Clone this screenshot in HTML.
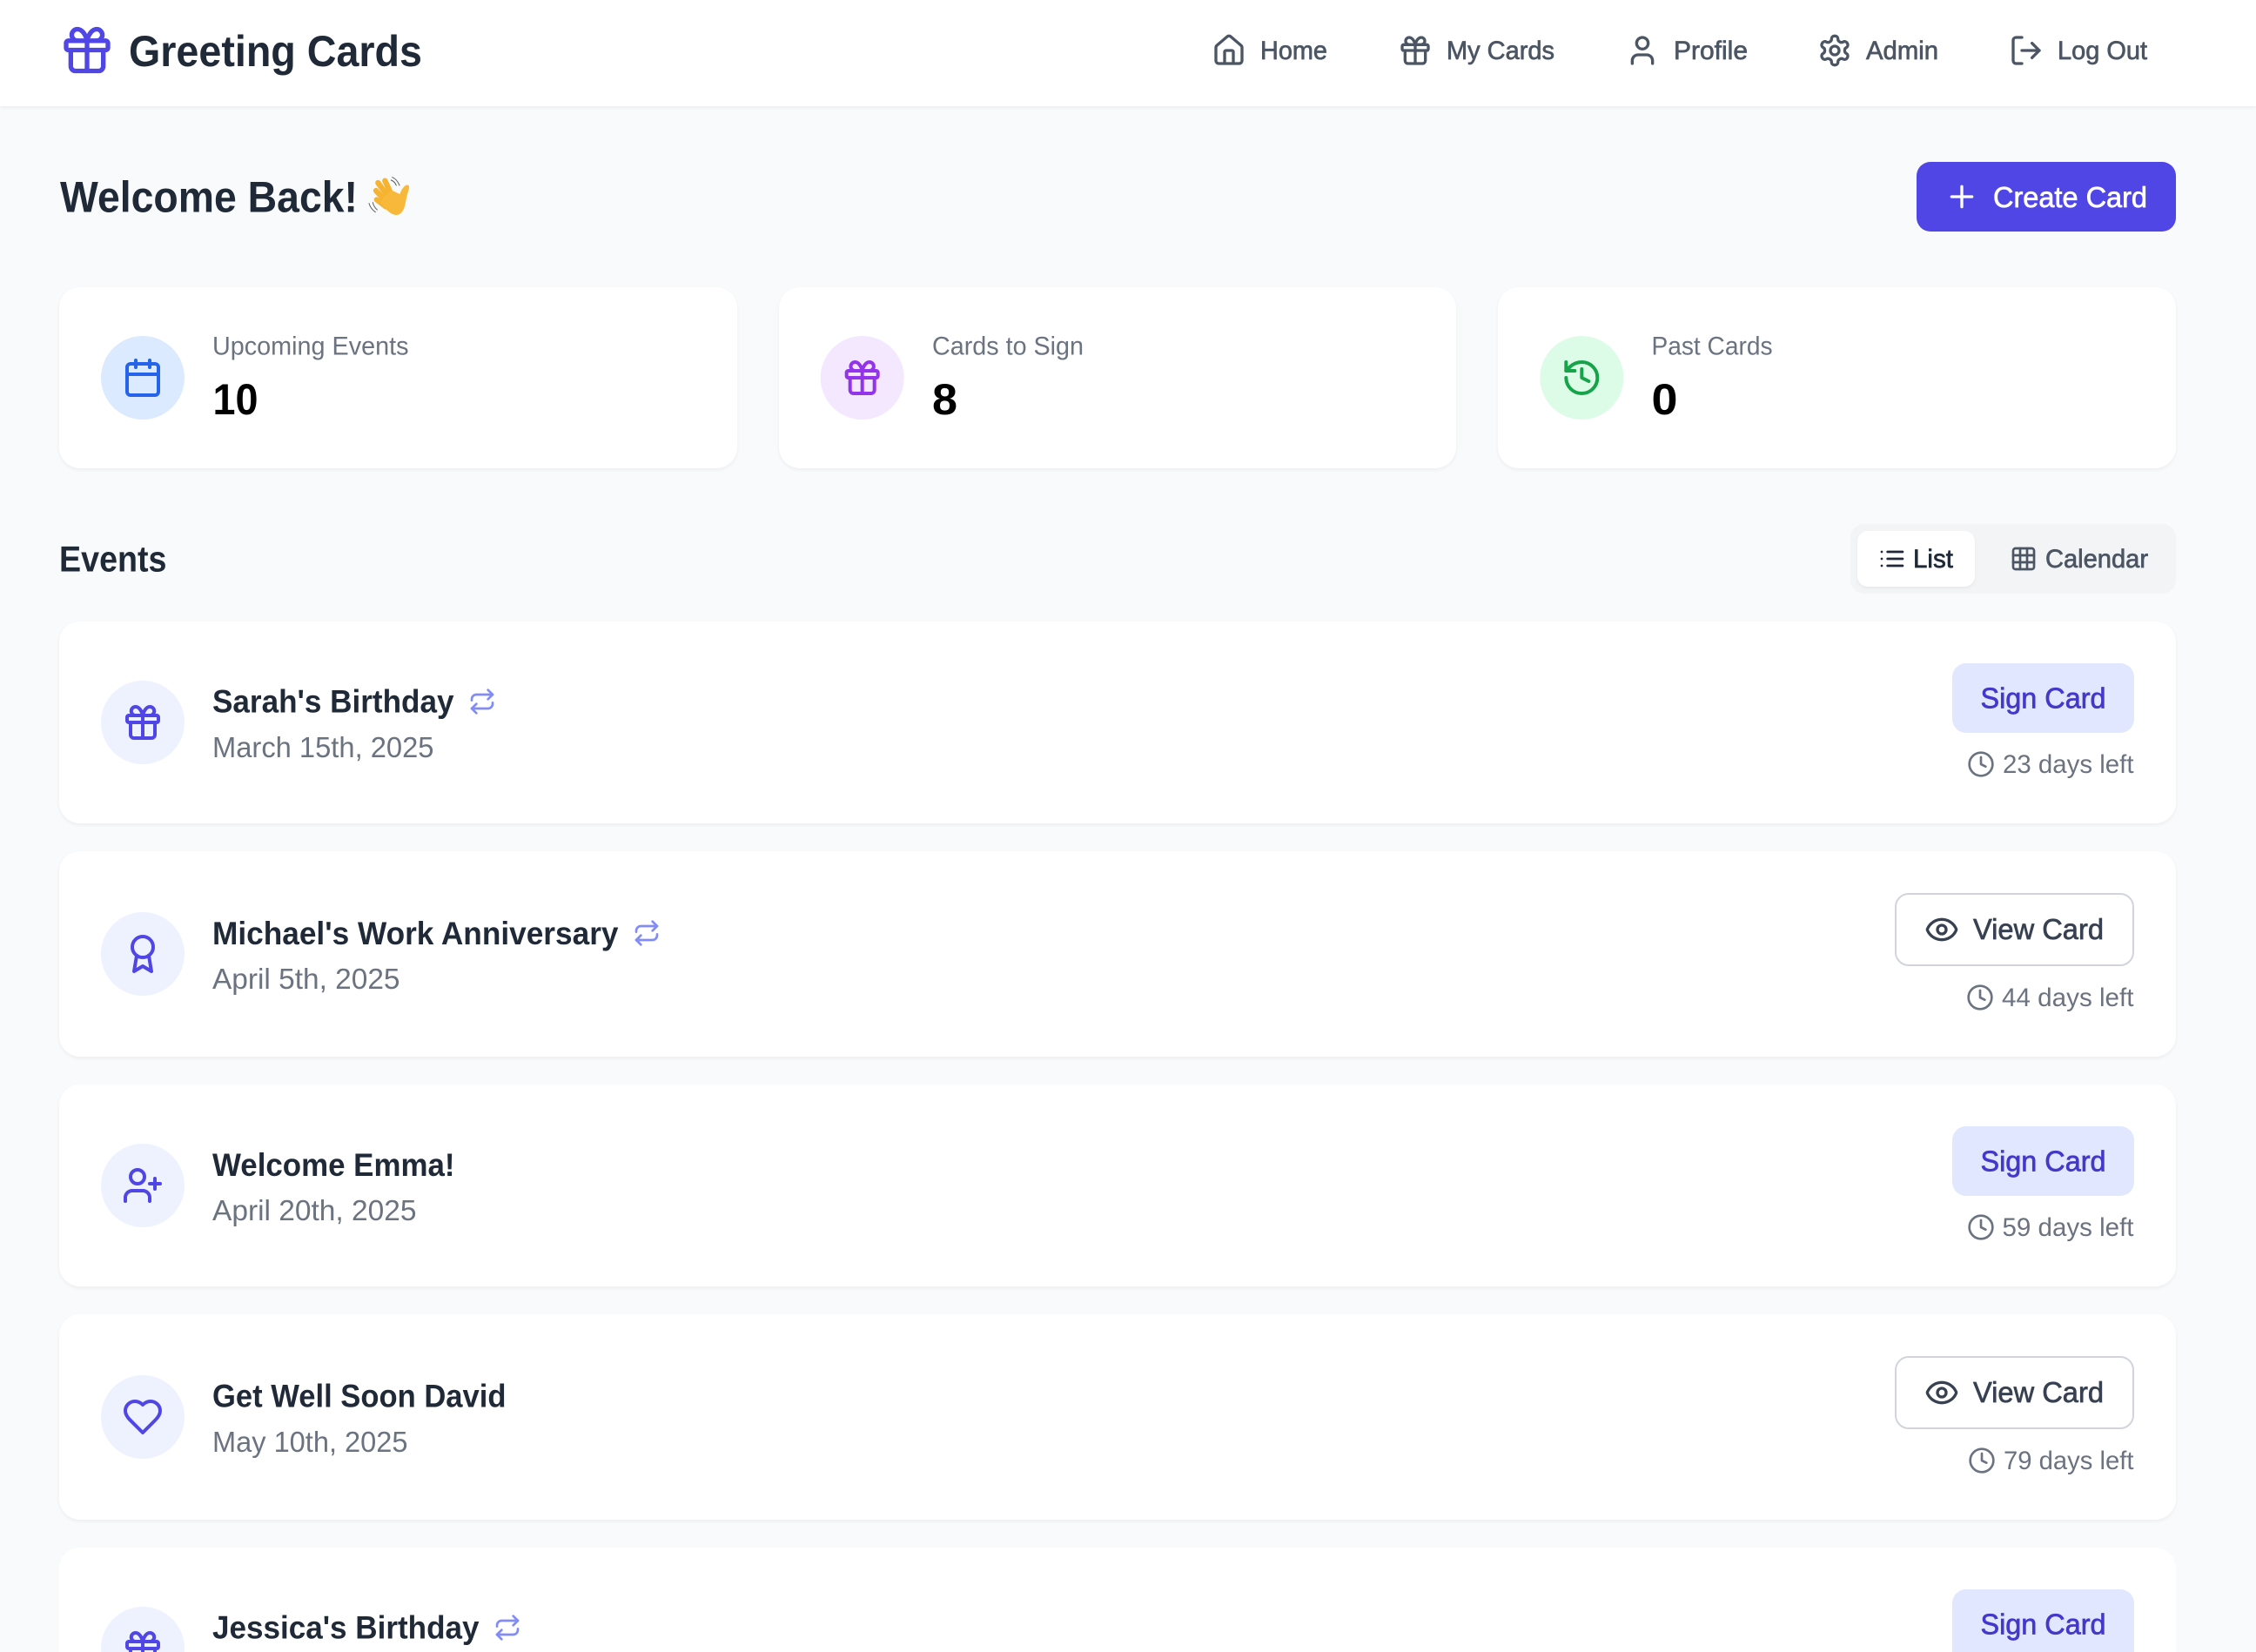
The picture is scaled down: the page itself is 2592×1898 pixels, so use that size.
<!DOCTYPE html>
<html lang="en"><head><meta charset="utf-8"><title>Greeting Cards</title>
<style>
html,body{margin:0;padding:0;width:2592px;height:1898px;overflow:hidden;background:#f9fafb}
#wrap{position:relative;width:2592px;height:1898px;overflow:hidden;background:#f9fafb}
.box{position:absolute;box-sizing:border-box;background:#fff}
.card{border-radius:24px;box-shadow:0 2px 4px rgba(0,0,0,.05)}
svg.o{position:absolute;left:0;top:0}
text{font-family:"Liberation Sans",sans-serif;white-space:pre}
.b{font-weight:700}
.m{stroke-width:.7px;paint-order:stroke}
.nav{font-size:29.5px;fill:#4b5563;stroke:#4b5563}
.lab{font-size:29.5px;fill:#6b7280}
.num{font-size:50px;font-weight:700;fill:#000}
.tt{font-size:37.5px;font-weight:700;fill:#1f2937}
.dt{font-size:33.5px;fill:#6b7280}
.dl{font-size:29.5px;fill:#6b7280}
.sg{font-size:33.5px;fill:#4338ca;stroke:#4338ca}
.vw{font-size:33.5px;fill:#374151;stroke:#374151}
symbol{overflow:visible}
.s{fill:none;stroke-width:2;stroke-linecap:round;stroke-linejoin:round}
</style></head>
<body>
<div id="wrap">
<div class="box" style="left:0;top:0;width:2592px;height:122px;box-shadow:0 2px 4px rgba(0,0,0,.05)"></div>
<div class="box" style="left:2202px;top:186px;width:298px;height:80px;background:#4f46e5;border-radius:16px"></div>
<div class="box card" style="left:68px;top:330px;width:778.67px;height:208px"></div>
<div class="box card" style="left:894.67px;top:330px;width:778.67px;height:208px"></div>
<div class="box card" style="left:1721.33px;top:330px;width:778.67px;height:208px"></div>
<div class="box" style="left:2126px;top:602px;width:374px;height:80px;background:#f3f4f6;border-radius:16px"></div>
<div class="box" style="left:2134px;top:610px;width:135px;height:64px;border-radius:12px;box-shadow:0 2px 4px rgba(0,0,0,.05)"></div>
<div class="box card" style="left:68px;top:714px;width:2432px;height:232px"></div>
<div class="box card" style="left:68px;top:978px;width:2432px;height:236px"></div>
<div class="box card" style="left:68px;top:1246px;width:2432px;height:232px"></div>
<div class="box card" style="left:68px;top:1510px;width:2432px;height:236px"></div>
<div class="box" style="left:68px;top:1778px;width:2432px;height:120px;border-radius:24px 24px 0 0"></div>
<div class="box" style="left:2243px;top:762px;width:209px;height:80px;background:#e0e7ff;border-radius:16px"></div>
<div class="box" style="left:2177px;top:1026px;width:275px;height:84px;border:2px solid #d1d5db;border-radius:16px"></div>
<div class="box" style="left:2243px;top:1294px;width:209px;height:80px;background:#e0e7ff;border-radius:16px"></div>
<div class="box" style="left:2177px;top:1558px;width:275px;height:84px;border:2px solid #d1d5db;border-radius:16px"></div>
<div class="box" style="left:2243px;top:1826px;width:209px;height:72px;background:#e0e7ff;border-radius:16px 16px 0 0"></div>

<svg class="o" width="2592" height="1898" viewBox="0 0 2592 1898" xmlns="http://www.w3.org/2000/svg">
<defs>
<symbol id="gift" viewBox="0 0 24 24"><g class="s"><rect x="3" y="8" width="18" height="4" rx="1"/><path d="M12 8v13"/><path d="M19 12v7a2 2 0 0 1-2 2H7a2 2 0 0 1-2-2v-7"/><path d="M7.9 8a2.5 2.5 0 0 1 0-5A4.5 8 0 0 1 12 8a4.5 8 0 0 1 4.1-5 2.5 2.5 0 0 1 0 5"/></g></symbol>
<symbol id="home" viewBox="0 0 24 24"><g class="s"><path d="M15 21v-8a1 1 0 0 0-1-1h-4a1 1 0 0 0-1 1v8"/><path d="M3 10a2 2 0 0 1 .709-1.528l7-5.999a2 2 0 0 1 2.582 0l7 5.999A2 2 0 0 1 21 10v9a2 2 0 0 1-2 2H5a2 2 0 0 1-2-2z"/></g></symbol>
<symbol id="user" viewBox="0 0 24 24"><g class="s"><path d="M19 21v-2a4 4 0 0 0-4-4H9a4 4 0 0 0-4 4v2"/><circle cx="12" cy="7" r="4"/></g></symbol>
<symbol id="gear" viewBox="0 0 24 24"><g class="s"><path d="M12.22 2h-.44a2 2 0 0 0-2 2v.18a2 2 0 0 1-1 1.73l-.43.25a2 2 0 0 1-2 0l-.15-.08a2 2 0 0 0-2.73.73l-.22.38a2 2 0 0 0 .73 2.73l.15.1a2 2 0 0 1 1 1.72v.51a2 2 0 0 1-1 1.74l-.15.09a2 2 0 0 0-.73 2.73l.22.38a2 2 0 0 0 2.73.73l.15-.08a2 2 0 0 1 2 0l.43.25a2 2 0 0 1 1 1.73V20a2 2 0 0 0 2 2h.44a2 2 0 0 0 2-2v-.18a2 2 0 0 1 1-1.73l.43-.25a2 2 0 0 1 2 0l.15.08a2 2 0 0 0 2.73-.73l.22-.39a2 2 0 0 0-.73-2.73l-.15-.08a2 2 0 0 1-1-1.74v-.5a2 2 0 0 1 1-1.74l.15-.09a2 2 0 0 0 .73-2.73l-.22-.38a2 2 0 0 0-2.73-.73l-.15.08a2 2 0 0 1-2 0l-.43-.25a2 2 0 0 1-1-1.73V4a2 2 0 0 0-2-2z"/><circle cx="12" cy="12" r="3"/></g></symbol>
<symbol id="logout" viewBox="0 0 24 24"><g class="s"><path d="M9 21H5a2 2 0 0 1-2-2V5a2 2 0 0 1 2-2h4"/><polyline points="16 17 21 12 16 7"/><line x1="21" x2="9" y1="12" y2="12"/></g></symbol>
<symbol id="plus" viewBox="0 0 24 24"><g class="s"><path d="M5 12h14M12 5v14"/></g></symbol>
<symbol id="cal" viewBox="0 0 24 24"><g class="s"><path d="M8 2v4"/><path d="M16 2v4"/><rect width="18" height="18" x="3" y="4" rx="2"/><path d="M3 10h18"/></g></symbol>
<symbol id="hist" viewBox="0 0 24 24"><g class="s"><path d="M3 12a9 9 0 1 0 9-9 9.75 9.75 0 0 0-6.74 2.74L3 8"/><path d="M3 3v5h5"/><path d="M12 7v5l4 2"/></g></symbol>
<symbol id="list" viewBox="0 0 24 24"><g class="s"><path d="M3 12h.01"/><path d="M3 18h.01"/><path d="M3 6h.01"/><path d="M8 12h13"/><path d="M8 18h13"/><path d="M8 6h13"/></g></symbol>
<symbol id="grid" viewBox="0 0 24 24"><g class="s"><rect width="18" height="18" x="3" y="3" rx="2"/><path d="M3 9h18"/><path d="M3 15h18"/><path d="M9 3v18"/><path d="M15 3v18"/></g></symbol>
<symbol id="award" viewBox="0 0 24 24"><g class="s"><circle cx="12" cy="8" r="6"/><path d="M15.477 12.89 17 22l-5-3-5 3 1.523-9.11"/></g></symbol>
<symbol id="uplus" viewBox="0 0 24 24"><g class="s"><path d="M16 21v-2a4 4 0 0 0-4-4H6a4 4 0 0 0-4 4v2"/><circle cx="9" cy="7" r="4"/><line x1="19" x2="19" y1="8" y2="14"/><line x1="22" x2="16" y1="11" y2="11"/></g></symbol>
<symbol id="heart" viewBox="0 0 24 24"><g class="s"><path d="M19 14c1.49-1.46 3-3.21 3-5.5A5.5 5.5 0 0 0 16.5 3c-1.76 0-3 .5-4.5 2-1.5-1.5-2.74-2-4.5-2A5.5 5.5 0 0 0 2 8.5c0 2.3 1.5 4.05 3 5.5l7 7Z"/></g></symbol>
<symbol id="rep" viewBox="0 0 24 24"><g class="s"><path d="m17 2 4 4-4 4"/><path d="M3 11v-1a4 4 0 0 1 4-4h14"/><path d="m7 22-4-4 4-4"/><path d="M21 13v1a4 4 0 0 1-4 4H3"/></g></symbol>
<symbol id="clock" viewBox="0 0 24 24"><g class="s"><circle cx="12" cy="12" r="10"/><polyline points="12 6 12 12 16 14"/></g></symbol>
<symbol id="eye" viewBox="0 0 24 24"><g class="s"><path d="M2.062 12.348a1 1 0 0 1 0-.696 10.75 10.75 0 0 1 19.876 0 1 1 0 0 1 0 .696 10.75 10.75 0 0 1-19.876 0"/><circle cx="12" cy="12" r="3"/></g></symbol>
</defs>

<!-- nav -->
<use href="#gift" x="68" y="25.5" width="64" height="64" stroke="#4f46e5"/>
<text x="148" y="76" font-size="50" class="b" fill="#1f2937" textLength="337" lengthAdjust="spacingAndGlyphs">Greeting Cards</text>
<use href="#home" x="1392" y="38" width="40" height="40" stroke="#4b5563"/>
<text x="1448" y="68" class="nav m" textLength="77" lengthAdjust="spacingAndGlyphs">Home</text>
<use href="#gift" x="1606" y="38" width="40" height="40" stroke="#4b5563"/>
<text x="1662" y="68" class="nav m" textLength="124" lengthAdjust="spacingAndGlyphs">My Cards</text>
<use href="#user" x="1867" y="38" width="40" height="40" stroke="#4b5563"/>
<text x="1923" y="68" class="nav m" textLength="85" lengthAdjust="spacingAndGlyphs">Profile</text>
<use href="#gear" x="2088" y="38" width="40" height="40" stroke="#4b5563"/>
<text x="2144" y="68" class="nav m" textLength="83" lengthAdjust="spacingAndGlyphs">Admin</text>
<use href="#logout" x="2308" y="38" width="40" height="40" stroke="#4b5563"/>
<text x="2364" y="68" class="nav m" textLength="103" lengthAdjust="spacingAndGlyphs">Log Out</text>

<!-- heading -->
<text x="69" y="243.5" font-size="50" class="b" fill="#1f2937" textLength="342" lengthAdjust="spacingAndGlyphs">Welcome Back!</text>
<svg x="410" y="195" width="75" height="60" viewBox="0 0 225 180">
  <g fill="none" stroke="#f6b331" stroke-linecap="round">
    <path d="M122 92 L97 38" stroke-width="19"/>
    <path d="M108 94 L73 45" stroke-width="19"/>
    <path d="M100 110 L66 72" stroke-width="19"/>
    <path d="M100 128 L68 103" stroke-width="18"/>
  </g>
  <path d="M80 110 L118 70 L148 84 Q156 62 168 54 Q182 48 180 64 Q172 90 168 112 Q160 158 132 156 Q108 152 80 110Z" fill="#f8b93a"/>
  <g fill="none" stroke="#5b5b5b" stroke-width="3" stroke-linecap="round">
    <path d="M118 36 Q130 40 136 54"/><path d="M122 26 Q138 32 147 54"/>
    <path d="M55 113 Q58 128 70 138"/><path d="M42 116 Q48 136 64 146"/>
  </g>
</svg>
<use href="#plus" x="2234" y="206" width="40" height="40" stroke="#fff"/>
<text x="2290" y="238" font-size="33.5" fill="#fff" stroke="#fff" class="m" textLength="177" lengthAdjust="spacingAndGlyphs">Create Card</text>

<!-- stats -->
<circle cx="164" cy="434" r="48" fill="#dbeafe"/>
<use href="#cal" x="140" y="410" width="48" height="48" stroke="#2563eb"/>
<text x="244" y="407.5" class="lab" textLength="225.5" lengthAdjust="spacingAndGlyphs">Upcoming Events</text>
<text x="244.5" y="476" class="num" textLength="52" lengthAdjust="spacingAndGlyphs">10</text>
<circle cx="990.67" cy="434" r="48" fill="#f3e8ff"/>
<use href="#gift" x="966.67" y="410" width="48" height="48" stroke="#9333ea"/>
<text x="1071" y="407.5" class="lab" textLength="174" lengthAdjust="spacingAndGlyphs">Cards to Sign</text>
<text x="1071" y="476" class="num" textLength="29" lengthAdjust="spacingAndGlyphs">8</text>
<circle cx="1817.33" cy="434" r="48" fill="#dcfce7"/>
<use href="#hist" x="1793.33" y="410" width="48" height="48" stroke="#16a34a"/>
<text x="1897.5" y="407.5" class="lab" textLength="139" lengthAdjust="spacingAndGlyphs">Past Cards</text>
<text x="1897.5" y="476" class="num" textLength="30" lengthAdjust="spacingAndGlyphs">0</text>

<!-- events header -->
<text x="68" y="656.5" font-size="41.5" class="b" fill="#1f2937" textLength="123.5" lengthAdjust="spacingAndGlyphs">Events</text>
<use href="#list" x="2158" y="626" width="32" height="32" stroke="#1f2937"/>
<text x="2198" y="652" font-size="29.5" fill="#1f2937" stroke="#1f2937" class="m" textLength="46" lengthAdjust="spacingAndGlyphs">List</text>
<use href="#grid" x="2309" y="626" width="32" height="32" stroke="#4b5563"/>
<text x="2350" y="652" class="nav m" textLength="118" lengthAdjust="spacingAndGlyphs">Calendar</text>

<!-- event 1 -->
<circle cx="164" cy="830" r="48" fill="#eef2ff"/>
<use href="#gift" x="140" y="806" width="48" height="48" stroke="#4f46e5"/>
<text x="244" y="818.5" class="tt" textLength="277.5" lengthAdjust="spacingAndGlyphs">Sarah's Birthday</text>
<use href="#rep" x="538" y="790" width="32" height="32" stroke="#818cf8"/>
<text x="244" y="870" class="dt" textLength="254.5" lengthAdjust="spacingAndGlyphs">March 15th, 2025</text>
<text x="2275.5" y="813.5" class="sg m" textLength="144" lengthAdjust="spacingAndGlyphs">Sign Card</text>
<use href="#clock" x="2260" y="862" width="32" height="32" stroke="#6b7280"/>
<text x="2301" y="888" class="dl" textLength="150.5" lengthAdjust="spacingAndGlyphs">23 days left</text>

<!-- event 2 -->
<circle cx="164" cy="1096" r="48" fill="#eef2ff"/>
<use href="#award" x="140" y="1072" width="48" height="48" stroke="#4f46e5"/>
<text x="244" y="1085" class="tt" textLength="466.5" lengthAdjust="spacingAndGlyphs">Michael's Work Anniversary</text>
<use href="#rep" x="727" y="1056" width="32" height="32" stroke="#818cf8"/>
<text x="244" y="1136" class="dt" textLength="215.5" lengthAdjust="spacingAndGlyphs">April 5th, 2025</text>
<use href="#eye" x="2211" y="1048" width="40" height="40" stroke="#374151"/>
<text x="2267" y="1079" class="vw m" textLength="150" lengthAdjust="spacingAndGlyphs">View Card</text>
<use href="#clock" x="2259" y="1130" width="32" height="32" stroke="#6b7280"/>
<text x="2300" y="1156" class="dl" textLength="151.5" lengthAdjust="spacingAndGlyphs">44 days left</text>

<!-- event 3 -->
<circle cx="164" cy="1362" r="48" fill="#eef2ff"/>
<use href="#uplus" x="140" y="1338" width="48" height="48" stroke="#4f46e5"/>
<text x="244" y="1351" class="tt" textLength="278.5" lengthAdjust="spacingAndGlyphs">Welcome Emma!</text>
<text x="244" y="1402" class="dt" textLength="234.5" lengthAdjust="spacingAndGlyphs">April 20th, 2025</text>
<text x="2275.5" y="1345.5" class="sg m" textLength="144" lengthAdjust="spacingAndGlyphs">Sign Card</text>
<use href="#clock" x="2260" y="1394" width="32" height="32" stroke="#6b7280"/>
<text x="2300.5" y="1420" class="dl" textLength="151" lengthAdjust="spacingAndGlyphs">59 days left</text>

<!-- event 4 -->
<circle cx="164" cy="1628" r="48" fill="#eef2ff"/>
<use href="#heart" x="140" y="1604" width="48" height="48" stroke="#4f46e5"/>
<text x="244" y="1616.5" class="tt" textLength="337.5" lengthAdjust="spacingAndGlyphs">Get Well Soon David</text>
<text x="244" y="1668" class="dt" textLength="224.5" lengthAdjust="spacingAndGlyphs">May 10th, 2025</text>
<use href="#eye" x="2211" y="1580" width="40" height="40" stroke="#374151"/>
<text x="2267" y="1611" class="vw m" textLength="150" lengthAdjust="spacingAndGlyphs">View Card</text>
<use href="#clock" x="2261" y="1662" width="32" height="32" stroke="#6b7280"/>
<text x="2302" y="1688" class="dl" textLength="149.5" lengthAdjust="spacingAndGlyphs">79 days left</text>

<!-- event 5 (cut off by the frame) -->
<path d="M116 1894a48 48 0 0 1 96 0 48 48 0 0 1-.17 4H116.17A48 48 0 0 1 116 1894Z" fill="#eef2ff"/>
<svg x="140" y="1870" width="48" height="28" viewBox="0 0 24 14"><g class="s" stroke="#4f46e5"><path d="M4 8h16a1 1 0 0 1 1 1v2a1 1 0 0 1-1 1H4a1 1 0 0 1-1-1V9a1 1 0 0 1 1-1Z"/><path d="M12 8v5.5"/><path d="M19 12v1.5"/><path d="M5 12v1.5"/><path d="M7.9 8a2.5 2.5 0 0 1 0-5A4.5 8 0 0 1 12 8a4.5 8 0 0 1 4.1-5 2.5 2.5 0 0 1 0 5"/></g></svg>
<text x="244" y="1882.5" class="tt" textLength="306.5" lengthAdjust="spacingAndGlyphs">Jessica's Birthday</text>
<use href="#rep" x="567" y="1854" width="32" height="32" stroke="#818cf8"/>
<text x="2275.5" y="1877.5" class="sg m" textLength="144" lengthAdjust="spacingAndGlyphs">Sign Card</text>
</svg>
</div>
</body></html>
